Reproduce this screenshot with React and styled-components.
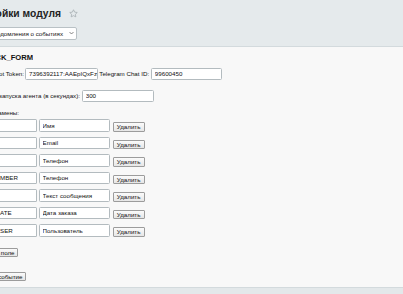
import React from "react"
import styled, { createGlobalStyle } from "styled-components"

const GlobalStyle = createGlobalStyle`
  html, body {
    margin: 0;
    padding: 0;
    background: #e5eaec;
  }
  body {
    font-family: "Liberation Sans", Arial, sans-serif;
  }
`

const Page = styled.div`
  width: 403px;
  height: 294px;
  overflow: hidden;
  display: flex;
  flex-direction: column;
`

const Header = styled.div`
  height: 47px;
  box-sizing: border-box;
  padding-top: 7.5px;
  border-bottom: 1px solid #d3dadd;
  background: #e5eaec;
  flex-shrink: 0;
`

const TitleRow = styled.div`
  display: flex;
  align-items: center;
  height: 12px;
  gap: 8px;
`

const Title = styled.h1`
  margin: 0;
  font-size: 10.3px;
  line-height: 12px;
  font-weight: bold;
  color: #222;
  white-space: nowrap;
`

// shows only the right end of its content; the rest is scrolled off to the left
const Cut = styled.div`
  display: flex;
  justify-content: flex-end;
  align-items: center;
  width: ${(p) => p.$w}px;
  flex-shrink: 0;
  overflow: hidden;
  white-space: nowrap;
  & > * {
    flex-shrink: 0;
  }
`

const SelectBox = styled.div`
  margin-top: 7.5px;
`

const Select = styled.div`
  display: flex;
  align-items: center;
  gap: 6px;
  height: 12.5px;
  box-sizing: border-box;
  padding: 0 2px 0 4px;
  background: #fff;
  border: 1px solid #b9c1c5;
  border-radius: 2px;
  font-size: 6.2px;
  color: #111;
`

const Content = styled.div`
  height: 240px;
  box-sizing: border-box;
  background: #f8f8f8;
  padding-top: 5.5px;
  display: flex;
  flex-direction: column;
  flex-shrink: 0;
`

const Heading = styled.div`
  font-size: 7.6px;
  line-height: 9px;
  font-weight: bold;
  color: #111;
`

const Row = styled.div`
  display: flex;
  align-items: center;
  margin-top: ${(p) => p.$mt}px;
  font-size: 6.2px;
  color: #111;
`

const Label = styled.span`
  font-size: 6.2px;
  line-height: 8px;
  white-space: nowrap;
  margin: 0 ${(p) => p.$mr || 0}px 0 ${(p) => p.$ml || 0}px;
  color: #111;
`

const Input = styled.input`
  width: ${(p) => p.$w}px;
  height: 12.5px;
  box-sizing: border-box;
  margin: 0 0 0 ${(p) => p.$ml || 0}px;
  padding: 0 0 0 3px;
  border: 1px solid #b3bbbf;
  border-radius: 1.5px;
  background: #fff;
  font-family: "Liberation Sans", Arial, sans-serif;
  font-size: 6.2px;
  color: #111;
  outline: none;
`

const TrimmedInput = styled(Input)`
  border-left: none;
  border-radius: 0 1.5px 1.5px 0;
  padding-left: 0;
`

const FieldList = styled.div`
  display: flex;
  flex-direction: column;
  gap: 5px;
  margin-top: 2.2px;
`

const FieldRow = styled.div`
  display: flex;
  align-items: flex-end;
`

const Button = styled.button`
  height: 9.5px;
  box-sizing: border-box;
  margin: 0 0 0 ${(p) => p.$ml || 0}px;
  padding: 0 2.5px;
  width: ${(p) => (p.$w ? `${p.$w}px` : "auto")};
  border: 1px solid #9c9c9c;
  border-radius: 1px;
  background: linear-gradient(#fbfbfb, #e6e6e6);
  font-family: "Liberation Sans", Arial, sans-serif;
  font-size: 6.2px;
  line-height: 7px;
  color: #111;
  white-space: nowrap;
`

const Footer = styled.div`
  flex: 1;
  background: #e3e8ea;
  border-top: 1px solid #d3dadd;
`

const Star = () => (
  <svg width="9" height="9" viewBox="0 0 24 24" fill="none" stroke="#a3abaf" strokeWidth="2" strokeLinejoin="round">
    <polygon points="12 2 15.1 8.3 22 9.3 17 14.1 18.2 21 12 17.8 5.8 21 7 14.1 2 9.3 8.9 8.3 12 2" />
  </svg>
)

const Chevron = () => (
  <svg width="5" height="4" viewBox="0 0 10 6" fill="none" stroke="#555" strokeWidth="1.4">
    <polyline points="1 1 5 5 9 1" />
  </svg>
)

const fields = [
  ["", "Имя"],
  ["", "Email"],
  ["", "Телефон"],
  ["MBER", "Телефон"],
  ["", "Текст сообщения"],
  ["ATE", "Дата заказа"],
  ["SER", "Пользователь"],
]

export default function App() {
  return (
    <Page>
      <GlobalStyle />
      <Header>
        <TitleRow>
          <Cut $w={61}>
            <Title>Настройки модуля</Title>
          </Cut>
          <Star />
        </TitleRow>
        <SelectBox>
          <Cut $w={77}>
            <Select>
              Уведомления о событиях
              <Chevron />
            </Select>
          </Cut>
        </SelectBox>
      </Header>

      <Content>
        <Cut $w={33}>
          <Heading>TELEGRAM_FEEDBACK_FORM</Heading>
        </Cut>

        <Row $mt={6}>
          <Cut $w={24}>
            <Label>Telegram Bot Token:</Label>
          </Cut>
          <Input $w={73} $ml={1} readOnly defaultValue="7396392117:AAEpIQxFz8k" />
          <Label $ml={1.3} $mr={1.7}>Telegram Chat ID:</Label>
          <Input $w={71} readOnly defaultValue="99600450" />
        </Row>

        <Row $mt={9.5}>
          <Cut $w={80}>
            <Label>Интервал запуска агента (в секундах):</Label>
          </Cut>
          <Input $w={72} $ml={1.7} readOnly defaultValue="300" />
        </Row>

        <Row $mt={7}>
          <Cut $w={19}>
            <Label>Поля для замены:</Label>
          </Cut>
        </Row>

        <FieldList>
          {fields.map(([code, name], i) => (
            <FieldRow key={`field${i}`}>
              <TrimmedInput $w={37} readOnly defaultValue={code} />
              <Input $w={71} $ml={1.6} readOnly defaultValue={name} />
              <Button $w={32} $ml={3}>Удалить</Button>
            </FieldRow>
          ))}
        </FieldList>

        <Row $mt={11}>
          <Cut $w={18}>
            <Button>Добавить поле</Button>
          </Cut>
        </Row>

        <Row $mt={14.5}>
          <Cut $w={26}>
            <Button>Добавить событие</Button>
          </Cut>
        </Row>
      </Content>

      <Footer />
    </Page>
  )
}
